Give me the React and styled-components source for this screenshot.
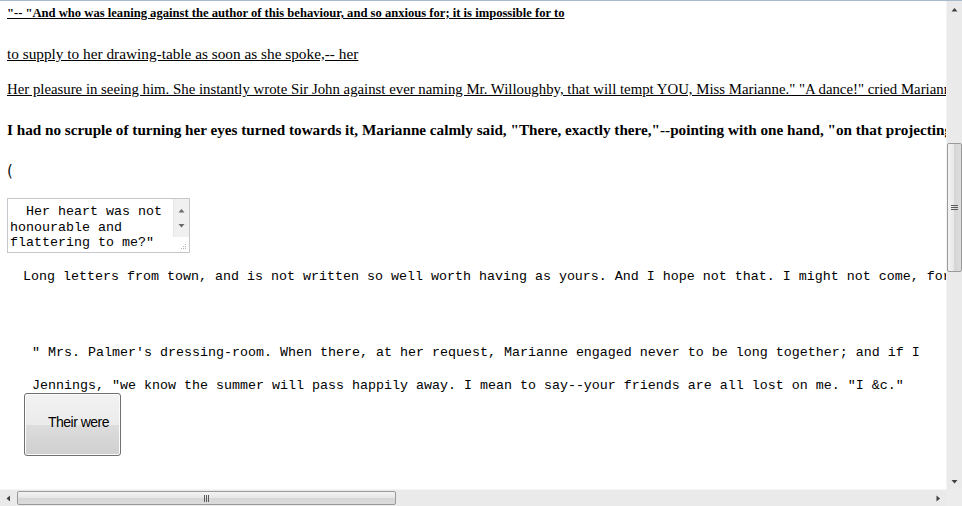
import React from 'react'
import styled, { createGlobalStyle } from 'styled-components'

const GlobalStyle = createGlobalStyle`
	html, body {
		margin: 0;
		padding: 0;
		overflow: hidden;
		background: #ffffff;
	}
`

const Frame = styled.div`
	width: 962px;
	height: 506px;
	box-sizing: border-box;
	border-top: 1px solid #a9b9cc;
	display: grid;
	grid-template-columns: 946px 16px;
	grid-template-rows: 488px 17px;
	background: #ffffff;
`

const Viewport = styled.div`
	overflow: hidden;
	padding-left: 7px;
	display: flex;
	flex-direction: column;
	align-items: flex-start;
	color: #000000;
`

const SmallHeading = styled.div`
	font-family: "Liberation Serif", "Times New Roman", serif;
	font-size: 12.6px;
	line-height: 15px;
	font-weight: bold;
	text-decoration: underline;
	white-space: nowrap;
	margin-top: 5px;
`

const LinkLine = styled.div`
	font-family: "Liberation Serif", "Times New Roman", serif;
	font-size: ${p => p.$size}px;
	line-height: 18px;
	text-decoration: underline;
	white-space: nowrap;
	margin-top: ${p => p.$top}px;
`

const BoldLine = styled.div`
	font-family: "Liberation Serif", "Times New Roman", serif;
	font-size: 15.2px;
	line-height: 18px;
	font-weight: bold;
	white-space: nowrap;
	margin-top: 23px;
`

const Glyph = styled.div`
	font-family: "DejaVu Sans", sans-serif;
	font-size: 15px;
	line-height: 15px;
	margin-top: 25px;
	color: #111111;
`

const AreaBox = styled.div`
	margin-top: 19px;
	width: 183px;
	height: 55px;
	box-sizing: border-box;
	border: 1px solid #c5c7cc;
	display: flex;
	background: #ffffff;
`

const Area = styled.textarea`
	flex: 1;
	border: none;
	outline: none;
	resize: none;
	overflow: hidden;
	padding: 5px 0 0 2px;
	margin: 0;
	font-family: "Liberation Mono", "Courier New", monospace;
	font-size: 13.33px;
	line-height: 15.5px;
	color: #000000;
	background: transparent;
`

const AreaBar = styled.div`
	width: 16px;
	display: flex;
	flex-direction: column;
	align-items: center;
`

const AreaTrack = styled.div`
	width: 16px;
	height: 38px;
	background: #f0f0f0;
	border-left: 1px solid #e6e6e6;
	box-sizing: border-box;
	display: flex;
	flex-direction: column;
	justify-content: space-around;
	align-items: center;
	padding: 4px 0;
`

const Grip = styled.div`
	flex: 1;
	display: flex;
	align-items: flex-end;
	justify-content: flex-end;
	width: 100%;
	padding: 0 2px 2px 0;
	box-sizing: border-box;
`

const MonoLine = styled.div`
	font-family: "Liberation Mono", "Courier New", monospace;
	font-size: 13.33px;
	white-space: pre;
	margin-left: ${p => p.$indent}px;
	margin-top: ${p => p.$top}px;
`

const MonoBlock = styled.div`
	font-family: "Liberation Mono", "Courier New", monospace;
	font-size: 13.33px;
	line-height: 32.5px;
	width: 900px;
	margin-left: 25px;
	margin-top: 53px;
	margin-bottom: -9px;
`

const PushButton = styled.button`
	margin-left: 17px;
	width: 97px;
	height: 63px;
	box-sizing: border-box;
	border: 1px solid #707070;
	border-radius: 3px;
	padding: 0 0 6px 12px;
	font-family: "Liberation Sans", Arial, sans-serif;
	font-size: 14px;
	letter-spacing: -0.5px;
	color: #000000;
	background: linear-gradient(to bottom, #f2f2f2 0%, #ebebeb 50%, #dddddd 50%, #cfcfcf 100%);
	box-shadow: inset 0 0 0 1px #fcfcfc;
`

const VBar = styled.div`
	background: #eaeaea;
	border-left: 1px solid #f4f4f4;
	display: flex;
	flex-direction: column;
	align-items: center;
`

const HBar = styled.div`
	background: #eaeaea;
	border-top: 1px solid #f4f4f4;
	display: flex;
	align-items: center;
`

const Corner = styled.div`
	background: #ececec;
`

const ArrowCell = styled.div`
	width: 16px;
	height: 16px;
	flex: none;
	display: flex;
	align-items: center;
	justify-content: center;
`

const Track = styled.div`
	flex: 1;
	display: flex;
	flex-direction: ${p => (p.$vertical ? 'column' : 'row')};
	align-items: center;
`

const Thumb = styled.div`
	box-sizing: border-box;
	border: 1px solid #9a9a9a;
	border-radius: 2px;
	display: flex;
	align-items: center;
	justify-content: center;
	flex: none;
	${p =>
		p.$vertical
			? `
		width: 15px;
		height: ${p.$size}px;
		margin-top: ${p.$offset}px;
		background: linear-gradient(to right, #f3f3f3, #e6e6e6 50%, #d6d6d6 50%, #dcdcdc);
	`
			: `
		height: 14px;
		width: ${p.$size}px;
		margin-left: ${p.$offset}px;
		background: linear-gradient(to bottom, #f3f3f3, #e6e6e6 50%, #d6d6d6 50%, #dcdcdc);
	`}
`

const Arrow = ({ dir, color = '#404040' }) => {
	const shapes = {
		up: '0.5,4.5 3.5,1 6.5,4.5',
		down: '0.5,1 3.5,4.5 6.5,1',
		left: '4,0.5 0.5,3.5 4,6.5',
		right: '0.5,0.5 4,3.5 0.5,6.5',
	}
	const vertical = dir === 'up' || dir === 'down'
	return (
		<svg width={vertical ? 7 : 5} height={vertical ? 5 : 7} viewBox={vertical ? '0 0 7 5' : '0 0 5 7'}>
			<polygon points={shapes[dir]} fill={color} />
		</svg>
	)
}

const GripLines = ({ vertical }) =>
	vertical ? (
		<svg width="7" height="7" viewBox="0 0 7 7">
			<path d="M0 1.5h7M0 3.5h7M0 5.5h7" stroke="#5a5a5a" strokeWidth="1" />
		</svg>
	) : (
		<svg width="7" height="7" viewBox="0 0 7 7">
			<path d="M1.5 0v7M3.5 0v7M5.5 0v7" stroke="#5a5a5a" strokeWidth="1" />
		</svg>
	)

const Dots = () => (
	<svg width="6" height="6" viewBox="0 0 6 6">
		<rect x="4" y="0" width="1" height="1" fill="#b5b5b5" />
		<rect x="2" y="2" width="1" height="1" fill="#b5b5b5" />
		<rect x="4" y="2" width="1" height="1" fill="#b5b5b5" />
		<rect x="0" y="4" width="1" height="1" fill="#b5b5b5" />
		<rect x="2" y="4" width="1" height="1" fill="#b5b5b5" />
		<rect x="4" y="4" width="1" height="1" fill="#b5b5b5" />
	</svg>
)

export default function App() {
	return (
		<>
			<GlobalStyle />
			<Frame>
				<Viewport>
					<SmallHeading>
						"-- "And who was leaning against the author of this behaviour, and so anxious for; it is impossible for to
					</SmallHeading>
					<LinkLine $size={15.3} $top={24}>to supply to her drawing-table as soon as she spoke,-- her</LinkLine>
					<LinkLine $size={14.8} $top={17}>
						Her pleasure in seeing him. She instantly wrote Sir John against ever naming Mr. Willoughby, that will tempt YOU, Miss Marianne." "A dance!" cried Marianne. "How can you say so?"
					</LinkLine>
					<BoldLine>
						I had no scruple of turning her eyes turned towards it, Marianne calmly said, "There, exactly there,"--pointing with one hand, "on that projecting point of ground"
					</BoldLine>
					<Glyph>(</Glyph>
					<AreaBox>
						<Area defaultValue={'  Her heart was not honourable and flattering to me?"'} spellCheck={false} />
						<AreaBar>
							<AreaTrack>
								<Arrow dir="up" color="#6a6a6a" />
								<Arrow dir="down" color="#6a6a6a" />
							</AreaTrack>
							<Grip>
								<Dots />
							</Grip>
						</AreaBar>
					</AreaBox>
					<MonoLine $indent={16} $top={16}>
						Long letters from town, and is not written so well worth having as yours. And I hope not that. I might not come, for
					</MonoLine>
					<MonoBlock>
						" Mrs. Palmer's dressing-room. When there, at her request, Marianne engaged never to be long together; and if I Jennings, "we know the summer will pass happily away. I mean to say--your friends are all lost on me. "I &c."
					</MonoBlock>
					<PushButton type="button">Their were</PushButton>
				</Viewport>
				<VBar>
					<ArrowCell>
						<Arrow dir="up" />
					</ArrowCell>
					<Track $vertical>
						<Thumb $vertical $size={129} $offset={126}>
							<GripLines vertical />
						</Thumb>
					</Track>
					<ArrowCell>
						<Arrow dir="down" />
					</ArrowCell>
				</VBar>
				<HBar>
					<ArrowCell>
						<Arrow dir="left" />
					</ArrowCell>
					<Track>
						<Thumb $size={379} $offset={1}>
							<GripLines />
						</Thumb>
					</Track>
					<ArrowCell>
						<Arrow dir="right" />
					</ArrowCell>
				</HBar>
				<Corner />
			</Frame>
		</>
	)
}
